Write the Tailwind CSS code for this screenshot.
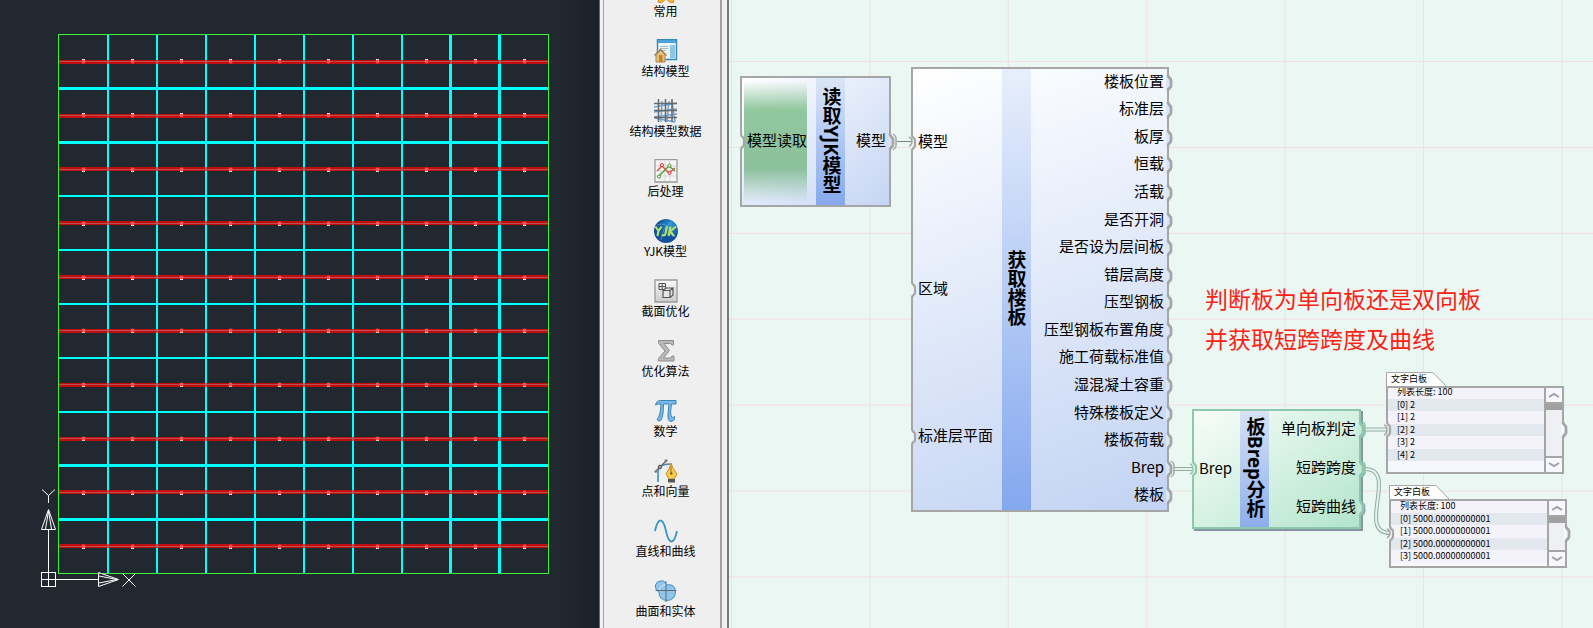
<!DOCTYPE html>
<html lang="zh-CN">
<head>
<meta charset="utf-8">
<meta name="viewport" content="width=device-width, initial-scale=1">
<title>楼板分析</title>
<script src="https://cdn.jsdelivr.net/npm/@tailwindcss/browser@4"></script>
</head>
<body class="flex h-screen overflow-hidden bg-[#efefef] font-['Noto_Sans_CJK_SC',sans-serif] text-black">

<!-- shared shapes -->
<svg class="hidden" aria-hidden="true">
  <symbol id="out" viewBox="0 0 10 16"><path d="M0 1 H2 Q2 2.500 3.500 3 Q5 3.500 5 5 V11 Q5 12.500 3.500 13 Q2 13.500 2 15 H0 Z" fill="currentColor"/><path d="M2 0 Q2 2 3.500 3 Q5 4 5 5.500 V10.500 Q5 12 3.500 13 Q2 14 2 16" fill="none" stroke="#a6a6a6" stroke-width="2.800"/></symbol>
  <symbol id="outg" viewBox="0 0 10 16"><path d="M0 1 H2 Q2 2.500 3.500 3 Q5 3.500 5 5 V11 Q5 12.500 3.500 13 Q2 13.500 2 15 H0 Z" fill="currentColor"/><path d="M4 2 Q6.500 4 6.500 6 V12 Q6 14 4 15" fill="none" stroke="#8494a3" stroke-width="1.500"/><path d="M2 0 Q2 2 3.500 3 Q5 4 5 5.500 V10.500 Q5 12 3.500 13 Q2 14 2 16" fill="none" stroke="#8ec7ac" stroke-width="2.800"/></symbol>
  <symbol id="in" viewBox="0 0 10 16"><path d="M-1 1 H1 Q1 2.500 2.500 3 Q4 3.500 4 5 V11 Q4 12.500 2.500 13 Q1 13.500 1 15 H-1 Z" fill="#ebf7f3"/><path d="M1 0 Q1 2 2.500 3 Q4 4 4 5.500 V10.500 Q4 12 2.500 13 Q1 14 1 16" fill="none" stroke="currentColor" stroke-width="2.200"/></symbol>
</svg>

<!-- CAD viewport -->
<main class="relative w-[599px] shrink-0 bg-linear-to-r from-[#222830] from-94% to-[#1a2027]">
  <svg class="block h-[628px] w-full" viewBox="0 0 599 628" preserveAspectRatio="xMinYMin" role="img" aria-label="楼板平面">
    <g fill="none" stroke="#00ffff" shape-rendering="crispEdges">
      <path stroke-width="2" d="M108 35V573M157 35V573M206 35V573M255 35V573M304 35V573M353 35V573M402 35V573"/>
      <path stroke-width="3" d="M450.500 35V573M499.500 35V573M59 88.500H548M59 142.500H548M59 465.500H548M59 519.500H548"/>
      <path stroke-width="2" d="M59 196H548M59 250H548M59 304H548M59 358H548M59 412H548"/>
    </g>
    <path fill="none" stroke="#c20d0d" stroke-width="4" shape-rendering="crispEdges" d="M59 62H548M59 116H548M59 169H548M59 223H548M59 277H548M59 331H548M59 385H548M59 439H548M59 492H548M59 546H548"/>
    <path fill="none" stroke="#bb4e4e" stroke-width="1" shape-rendering="crispEdges" d="M59 61.500H548M59 115.500H548M59 169.500H548M59 223.500H548M59 277.500H548M59 330.500H548M59 384.500H548M59 438.500H548M59 492.500H548M59 546.500H548"/>
    <path fill="none" stroke="#b05a5a" stroke-width="4" stroke-dasharray="2 47" shape-rendering="crispEdges" d="M107 62H548M107 116H548M107 169H548M107 223H548M107 277H548M107 331H548M107 385H548M107 439H548M107 492H548M107 546H548"/>
    <path fill="none" stroke="#ffffff" stroke-width="3" stroke-dasharray="3 46" d="M82 60.500H548M82 114.500H548M82 170.500H548M82 224.500H548M82 278.500H548M82 331.500H548M82 385.500H548M82 439.500H548M82 493.500H548M82 547.500H548"/>
    <path fill="none" stroke="#ff5050" stroke-width="4" stroke-linecap="round" stroke-dasharray="0.100 48.900" d="M83.500 61.500H548M83.500 115.500H548M83.500 169.500H548M83.500 223.500H548M83.500 277.500H548M83.500 330.500H548M83.500 384.500H548M83.500 438.500H548M83.500 492.500H548M83.500 546.500H548"/>
    <path fill="none" stroke="#3ff23f" shape-rendering="crispEdges" d="M58.500 34.500H548.500V573.500H58.500Z"/>
    <g fill="none" stroke="#ffffff">
      <path shape-rendering="crispEdges" d="M41.500 572.500H55.500V586.500H41.500ZM48.500 586V530M41 579.500H98"/>
      <path d="M41.500 529.500H55.500L48.500 509.500ZM45.500 529L48.500 511L51.500 529M98.500 572.500V586.500L118.500 579.500ZM99 576L117 579.500L99 583M42 489.500L48.500 495.500L55 489.500M48.500 495.500V503M122.500 573.500L135.500 586.500M135.500 573.500L122.500 586.500"/>
    </g>
  </svg>
</main>

<!-- category list -->
<aside class="flex shrink-0 border-l border-[#66696c] bg-[#f0f0f0] pl-[3px] pr-[5px]">
  <nav class="w-[119px] border-l border-r-2 border-[#a0a0a0] bg-[#efefef] pl-[7px] text-[12px] leading-[16px]">
    <ul class="-mt-[21px] flex flex-col">
      <li><button class="flex h-[60px] w-full flex-col items-center" type="button">
        <svg class="size-6" viewBox="0 0 24 24"><path d="M12 0l4 8 8 1-6 6 2 8-3 1-5-4-5 4-3-1 2-8-6-6 8-1z" fill="#f4b53a" stroke="#d08d24"/></svg>常用</button></li>
      <li><button class="flex h-[60px] w-full flex-col items-center" type="button">
        <svg class="size-6" viewBox="0 0 24 24"><path d="M3.500 .5h19v20h-19z" fill="#eaf4fb" stroke="#3088bb" stroke-width="1.400"/><path d="M4 1h18v3H4z" fill="#4ba3d8"/><path d="M6 7.500h8M6 9.500h8M6 11.500h6" stroke="#a8b9cc"/><path d="M16 6h5v13h-5z" fill="#8ec6e8"/><path d="M2 15.500L6.500 11l4.500 4.500V23H2z" fill="#e6c182" stroke="#aa8449"/><path d="M.5 16.500L6.500 10.500l6 6" fill="none" stroke="#9c7a4b" stroke-width="1.400"/><path d="M5 16h3.500v7H5z" fill="#c88420"/></svg>结构模型</button></li>
      <li><button class="flex h-[60px] w-full flex-col items-center" type="button">
        <svg class="size-6" viewBox="0 0 24 24" fill="none"><path d="M0 8l23-4M0 13l23-3M0 18l23-3M7 23L8 2M13 23l2-21M18 2l3 21M1 19l20 4" stroke="#6ea3d5" stroke-width="1.500"/><path d="M4.500 0v23M11.500 0v23M18 0v23M0 4.500h23M0 11.500h23M0 18.500h23" stroke="#686868" stroke-width="1.500"/></svg>结构模型数据</button></li>
      <li><button class="flex h-[60px] w-full flex-col items-center" type="button">
        <svg class="size-6" viewBox="0 0 24 24" fill="none"><path d="M1 .5h22v22.500H1z" fill="#f6f6f6" stroke="#9b9b9b" stroke-width="1.300"/><path d="M6 2v20M11 2v20M16 2v20M2 7h20M2 12h20M2 17h20" stroke="#d6d6d6"/><path d="M3 12l5-5 7 7 6-5" stroke="#df4e40" stroke-width="1.300"/><path d="M4 18l11-11 6 5" stroke="#559a34" stroke-width="1.300"/><circle cx="8" cy="6" r="1.500" fill="#fff" stroke="#d33"/><circle cx="15.500" cy="14" r="1.500" fill="#fff" stroke="#d33"/><circle cx="5" cy="17.500" r="1.500" fill="#fff" stroke="#4a922a"/><circle cx="15.500" cy="6.500" r="1.500" fill="#fff" stroke="#4a922a"/></svg>后处理</button></li>
      <li><button class="flex h-[60px] w-full flex-col items-center" type="button">
        <svg class="size-6" viewBox="0 0 24 24" fill="none"><defs><radialGradient id="gl" cx=".7" cy=".25"><stop stop-color="#2c9ad0"/><stop offset="1" stop-color="#124f9c"/></radialGradient></defs><circle cx="12" cy="12" r="12" fill="url(#gl)"/><path d="M3 6q10-5 18 12M7 21Q8 8 18 3" stroke="#69aada" stroke-width=".7"/><path d="M1.500 7.500l3 4.500 3-4.500M4.500 12l-1 5M13 7.500l-1.500 7q-.7 2.500-3.500 1.500M16.500 7.500l-2 9.500M22 7.500l-6 5 4 4.500" stroke="#b1e36c" stroke-width="2.200"/></svg>YJK模型</button></li>
      <li><button class="flex h-[60px] w-full flex-col items-center" type="button">
        <svg class="size-6" viewBox="0 0 24 24" fill="none"><defs><linearGradient id="bx" x2="0" y2="1"><stop stop-color="#fafafa"/><stop offset="1" stop-color="#cbcbcb"/></linearGradient></defs><path d="M1 1h22v22H1z" fill="url(#bx)" stroke="#999" stroke-width="1.300"/><path d="M5 4.500h6.500v6H5zM8.200 4v7M4.500 7.500h7.500" stroke="#555"/><path d="M9 11.500h7v7H9zM9 11.500l3-2.500h7l-3 2.500M19 9v7l-3 2.500" fill="#e5e5e5" stroke="#555" stroke-width="1.200"/></svg>截面优化</button></li>
      <li><button class="flex h-[60px] w-full flex-col items-center" type="button">
        <svg class="size-6" viewBox="0 0 24 24"><path d="M4.500 1.500h15v4.500h-2l-.7-1.500H10l5.500 7L9.500 19h7.500l1-2h2v5h-15.500v-2.500l6.500-7.500-6.500-8z" fill="#b9b9b9" stroke="#8f8f8f"/></svg>优化算法</button></li>
      <li><button class="flex h-[60px] w-full flex-col items-center" type="button">
        <svg class="size-6" viewBox="0 0 24 24"><path d="M1.500 6Q2.500 1.500 6.500 1.500H22V5H17.500Q16 13 17 17Q18 20 20.500 17.500Q21 22.500 16.500 22.500Q13.500 22 14 15L15 5H9.500Q9.500 17 7 21Q4.500 23.500 3 20.500Q6.500 17 7 5Q4 4.500 1.500 6Z" fill="#7ab9e7" stroke="#3785b8"/></svg>数学</button></li>
      <li><button class="flex h-[60px] w-full flex-col items-center" type="button">
        <svg class="size-6" viewBox="0 0 24 24" fill="none"><path d="M4 23V13Q4 5 16 5" stroke="#358fc5" stroke-width="1.600"/><path d="M1 13L13 1" stroke="#666" stroke-width="1.200"/><circle cx="1.800" cy="12.500" r="1.200" fill="#777"/><circle cx="12" cy="1.800" r="1.500" fill="#777"/><circle cx="6" cy="8" r="1.800" fill="#999" stroke="#555"/><path d="M17 4q-1 6-5 11l3 5h5l3-5q-5-6-6-11z" fill="#f8cd4e" stroke="#c88c20"/><path d="M17 7v7" stroke="#a86d10"/><circle cx="17.300" cy="14.500" r="1.200" fill="#875a10"/><path d="M14 20h7v3.500h-7z" fill="#555"/></svg>点和向量</button></li>
      <li><button class="flex h-[60px] w-full flex-col items-center" type="button">
        <svg class="size-6" viewBox="0 0 24 24" fill="none"><path d="M1 12C4 -2 9 -2 12 12S20 26 23 12" stroke="#3993c6" stroke-width="1.800"/></svg>直线和曲线</button></li>
      <li><button class="flex h-[60px] w-full flex-col items-center" type="button">
        <svg class="size-6" viewBox="0 0 24 24" fill="none"><path d="M7 2Q11 1 12 6Q21 4 21.500 13Q21 21 13 21.500Q5 21 5 13Q1 11 1.500 6Q2.500 2 7 2Z" fill="#92c5ec" stroke="#4290c2"/><path d="M5 12Q6 6 12 5.500" stroke="#d8edfb"/><path d="M12 2v21M1.500 11.500h21" stroke="#5c6c77"/></svg>曲面和实体</button></li>
    </ul>
  </nav>
</aside>

<!-- node canvas -->
<section class="relative min-w-0 flex-1 overflow-hidden border-l-2 border-[#777b7a] bg-[#ebf7f3] text-[15px] leading-[20px]">
  <svg class="absolute inset-0 size-full" aria-hidden="true">
    <defs><pattern id="mesh" x="2" y="61" width="138.400" height="85.900" patternUnits="userSpaceOnUse"><path d="M.5 0V86M0 .5H139" stroke="#f2dfdf" fill="none"/></pattern></defs>
    <rect width="100%" height="100%" fill="url(#mesh)"/>
  </svg>

  <!-- 读取YJK模型 -->
  <article class="absolute left-[11px] top-[76px] flex h-[131px] w-[151px] border-2 border-[#a6a6a6] bg-linear-to-br from-white to-[#c5d5f4]">
    <div class="my-[3px] ml-[2px] flex w-[63px] items-center bg-[linear-gradient(to_bottom,#8fc69b00,#92c89d_24%,#8bc09c_72%,#8bbf9d00)]"><span class="-mr-2 ml-[3px] whitespace-nowrap pb-[3px]">模型读取</span></div>
    <h2 class="ml-[9px] flex w-[29px] items-center justify-center bg-linear-to-b from-[#dce6f8] to-[#86a8ec] pb-[3px] font-['Noto_Sans','Noto_Sans_CJK_SC',sans-serif] text-[19px] font-bold [writing-mode:vertical-rl]">读取YJK模型</h2>
    <span class="flex flex-1 items-center justify-end pb-[3px] pr-[3px]">模型</span>
    <svg class="absolute -left-[2px] top-[56px] h-4 w-[10px] text-[#a6a6a6]"><use href="#in"/></svg>
    <svg class="absolute -right-[9px] top-[56px] h-4 w-[10px] text-[#d8e2f6]"><use href="#out"/></svg>
  </article>

  <!-- 获取楼板 -->
  <article class="absolute left-[182px] top-[67px] flex h-[445px] w-[258px] border-2 border-[#a6a6a6] bg-linear-160 from-white to-[#c2d3f3]">
    <ul class="flex w-[89px] flex-col pl-[5px]">
      <li class="flex flex-1 items-center whitespace-nowrap pb-[3px]">模型</li>
      <li class="flex flex-1 items-center whitespace-nowrap pb-[3px]">区域</li>
      <li class="flex flex-1 items-center whitespace-nowrap pb-[3px]">标准层平面</li>
    </ul>
    <h2 class="flex w-[29px] items-center justify-center bg-linear-to-b from-[#e8effb] to-[#84a7ee] pb-[3px] text-[19px] font-bold [writing-mode:vertical-rl]">获取楼板</h2>
    <ul class="flex flex-1 flex-col items-end pr-[3px]">
      <li class="flex flex-1 items-center pb-1">楼板位置</li>
      <li class="flex flex-1 items-center pb-1">标准层</li>
      <li class="flex flex-1 items-center pb-1">板厚</li>
      <li class="flex flex-1 items-center pb-1">恒载</li>
      <li class="flex flex-1 items-center pb-1">活载</li>
      <li class="flex flex-1 items-center pb-1">是否开洞</li>
      <li class="flex flex-1 items-center pb-1">是否设为层间板</li>
      <li class="flex flex-1 items-center pb-1">错层高度</li>
      <li class="flex flex-1 items-center pb-1">压型钢板</li>
      <li class="flex flex-1 items-center pb-1">压型钢板布置角度</li>
      <li class="flex flex-1 items-center pb-1">施工荷载标准值</li>
      <li class="flex flex-1 items-center pb-1">湿混凝土容重</li>
      <li class="flex flex-1 items-center pb-1">特殊楼板定义</li>
      <li class="flex flex-1 items-center pb-1">楼板荷载</li>
      <li class="flex flex-1 items-center pb-1">Brep</li>
      <li class="flex flex-1 items-center pb-1">楼板</li>
    </ul>
    <div class="absolute -left-[2px] inset-y-0 flex w-[10px] flex-col justify-around text-[#a6a6a6]">
      <svg class="h-4"><use href="#in"/></svg><svg class="h-4"><use href="#in"/></svg><svg class="h-4"><use href="#in"/></svg>
    </div>
    <div class="absolute -right-[9px] inset-y-0 flex w-[10px] flex-col justify-around text-[#dde6f7]">
      <svg class="h-4"><use href="#out"/></svg><svg class="h-4"><use href="#out"/></svg><svg class="h-4"><use href="#out"/></svg><svg class="h-4"><use href="#out"/></svg>
      <svg class="h-4"><use href="#out"/></svg><svg class="h-4"><use href="#out"/></svg><svg class="h-4"><use href="#out"/></svg><svg class="h-4"><use href="#out"/></svg>
      <svg class="h-4"><use href="#out"/></svg><svg class="h-4"><use href="#out"/></svg><svg class="h-4"><use href="#out"/></svg><svg class="h-4"><use href="#out"/></svg>
      <svg class="h-4"><use href="#out"/></svg><svg class="h-4"><use href="#out"/></svg><svg class="h-4"><use href="#out"/></svg><svg class="h-4"><use href="#out"/></svg>
    </div>
  </article>

  <!-- 板Brep分析 -->
  <article class="absolute left-[463px] top-[409px] flex h-[120px] w-[169px] border-2 border-[#8ec7ac] bg-linear-to-br from-[#f8fdfa] to-[#b2e5cc] shadow-[2px_2px_0_#8494a3]">
    <span class="flex w-[46px] items-center pb-[3px] pl-[5px]">Brep</span>
    <h2 class="flex w-[29px] items-center justify-center bg-linear-to-b from-[#d6e2f4] to-[#8eaeeb] pb-[3px] font-['Noto_Sans','Noto_Sans_CJK_SC',sans-serif] text-[19px] font-bold [writing-mode:vertical-rl]">板Brep分析</h2>
    <ul class="flex flex-1 flex-col items-end pr-[3px]">
      <li class="flex flex-1 items-center pb-1">单向板判定</li>
      <li class="flex flex-1 items-center pb-1">短跨跨度</li>
      <li class="flex flex-1 items-center pb-1">短跨曲线</li>
    </ul>
    <div class="absolute -left-[2px] inset-y-0 flex w-[10px] flex-col justify-around text-[#8ec7ac]">
      <svg class="h-4"><use href="#in"/></svg>
    </div>
    <div class="absolute -right-[9px] inset-y-0 flex w-[10px] flex-col justify-around text-[#c4ebd8]">
      <svg class="h-4"><use href="#outg"/></svg><svg class="h-4"><use href="#outg"/></svg><svg class="h-4"><use href="#outg"/></svg>
    </div>
  </article>

  <!-- annotation -->
  <p class="absolute left-[476px] top-[278px] whitespace-nowrap text-[23px] leading-[40px] text-[#fb2314]">判断板为单向板还是双向板<br>并获取短跨跨度及曲线</p>

  <!-- list panels -->
  <article class="absolute left-[657px] top-[372px] w-[178px] text-[9px] leading-[13px]">
    <h3 class="relative h-[14px] w-[62px] pl-[5px]">
      <svg class="absolute inset-0 h-[15px] w-[62px]" aria-hidden="true"><path d="M.5 15V.5H47L60.500 14.500" fill="#fff" stroke="#a6a6a6"/></svg>
      <span class="relative">文字白板</span>
    </h3>
    <div class="relative flex h-[88px] border-2 border-[#a6a6a6] bg-[#f7f8fd]">
      <ul class="-mt-[2px] flex-1 leading-[11px]">
        <li class="bg-[#f5f3fa] pb-[2px] pl-[9px]">列表长度: 100</li>
        <li class="bg-[#e3e7ee] pb-px pl-[9px]">[0] 2</li>
        <li class="bg-[#f5f3fa] pb-[2px] pl-[9px]">[1] 2</li>
        <li class="bg-[#e3e7ee] pb-px pl-[9px]">[2] 2</li>
        <li class="bg-[#f5f3fa] pb-[2px] pl-[9px]">[3] 2</li>
        <li class="bg-[#e3e7ee] pb-px pl-[9px]">[4] 2</li>
      </ul>
      <div class="flex w-[18px] flex-col border-l-2 border-[#a6a6a6] bg-[#eef0f4]">
        <button class="flex h-4 items-center justify-center border-b-2 border-[#a6a6a6] bg-[#f7f8fd]" type="button" aria-label="向上"><svg class="h-[6px] w-[12px]" fill="none" stroke="#a0a0a0" stroke-width="2"><path d="M1 5L6 2L11 5"/></svg></button>
        <div class="flex-1"><div class="h-[6px] bg-[#a0a0a0]"></div></div>
        <button class="flex h-4 items-center justify-center border-t-2 border-[#a6a6a6] bg-[#f7f8fd]" type="button" aria-label="向下"><svg class="h-[6px] w-[12px]" fill="none" stroke="#a0a0a0" stroke-width="2"><path d="M1 1L6 4L11 1"/></svg></button>
      </div>
      <div class="absolute -left-[2px] inset-y-0 flex w-[10px] flex-col justify-around text-[#a6a6a6]"><svg class="h-4"><use href="#in"/></svg></div>
      <div class="absolute -right-[9px] inset-y-0 flex w-[10px] flex-col justify-around text-[#f7f8fd]"><svg class="h-4"><use href="#out"/></svg></div>
    </div>
    <div class="absolute left-0 right-0 top-[14px] h-[2px] bg-[#a6a6a6]"></div>
  </article>

  <article class="absolute left-[660px] top-[485px] w-[178px] text-[9px] leading-[13px]">
    <h3 class="relative h-[14px] w-[62px] pl-[5px]">
      <svg class="absolute inset-0 h-[15px] w-[62px]" aria-hidden="true"><path d="M.5 15V.5H47L60.500 14.500" fill="#fff" stroke="#a6a6a6"/></svg>
      <span class="relative">文字白板</span>
    </h3>
    <div class="relative flex h-[69px] border-2 border-[#a6a6a6] bg-[#f7f8fd]">
      <ul class="-mt-px flex-1 leading-[11px]">
        <li class="bg-[#f5f3fa] pb-[2px] pl-[9px]">列表长度: 100</li>
        <li class="bg-[#e3e7ee] pb-px pl-[9px]">[0] 5000.00000000001</li>
        <li class="bg-[#f5f3fa] pb-[2px] pl-[9px]">[1] 5000.00000000001</li>
        <li class="bg-[#e3e7ee] pb-px pl-[9px]">[2] 5000.00000000001</li>
        <li class="bg-[#f5f3fa] pb-[2px] pl-[9px]">[3] 5000.00000000001</li>
      </ul>
      <div class="flex w-[18px] flex-col border-l-2 border-[#a6a6a6] bg-[#eef0f4]">
        <button class="flex h-4 items-center justify-center border-b-2 border-[#a6a6a6] bg-[#f7f8fd]" type="button" aria-label="向上"><svg class="h-[6px] w-[12px]" fill="none" stroke="#a0a0a0" stroke-width="2"><path d="M1 5L6 2L11 5"/></svg></button>
        <div class="flex-1"><div class="h-[6px] bg-[#a0a0a0]"></div></div>
        <button class="flex h-4 items-center justify-center border-t-2 border-[#a6a6a6] bg-[#f7f8fd]" type="button" aria-label="向下"><svg class="h-[6px] w-[12px]" fill="none" stroke="#a0a0a0" stroke-width="2"><path d="M1 1L6 4L11 1"/></svg></button>
      </div>
      <div class="absolute -left-[2px] inset-y-0 flex w-[10px] flex-col justify-around text-[#a6a6a6]"><svg class="h-4"><use href="#in"/></svg></div>
      <div class="absolute -right-[9px] inset-y-0 flex w-[10px] flex-col justify-around text-[#f7f8fd]"><svg class="h-4"><use href="#out"/></svg></div>
    </div>
    <div class="absolute left-0 right-0 top-[14px] h-[2px] bg-[#a6a6a6]"></div>
  </article>

  <!-- wires -->
  <svg class="pointer-events-none absolute left-0 top-0 h-[628px] w-[864px]" fill="none" aria-hidden="true">
    <path d="M168 141.500H183" stroke="#798680"/>
    <path d="M445 469H463M636 429.500H658M636 469C670 469 627 533 661 533" stroke="#93ab9f" stroke-width="4"/>
    <path d="M445 469H463M636 429.500H658M636 469C670 469 627 533 661 533" stroke="#e4f5ed" stroke-width="2"/>
    <path d="M164 134Q167 136 167 138V146Q167 148 164 150M180 137Q183 138 183 141.500Q183 145 180 146M442 461Q445 463 445 465V473Q445 475 442 477" stroke="#a6a6a6" stroke-width="1.500"/>
    <path d="M461 464Q464 465 464 469Q464 473 461 474M633 421Q636 423 636 425V433Q636 435 633 437M633 461Q636 463 636 465V473Q636 475 633 477" stroke="#8ec7ac" stroke-width="1.500"/>
    <path d="M655 425Q658 426 658 430Q658 434 655 435M658 529Q661 530 661 533Q661 536 658 538" stroke="#a6a6a6" stroke-width="1.500"/>
  </svg>
</section>
</body>
</html>
